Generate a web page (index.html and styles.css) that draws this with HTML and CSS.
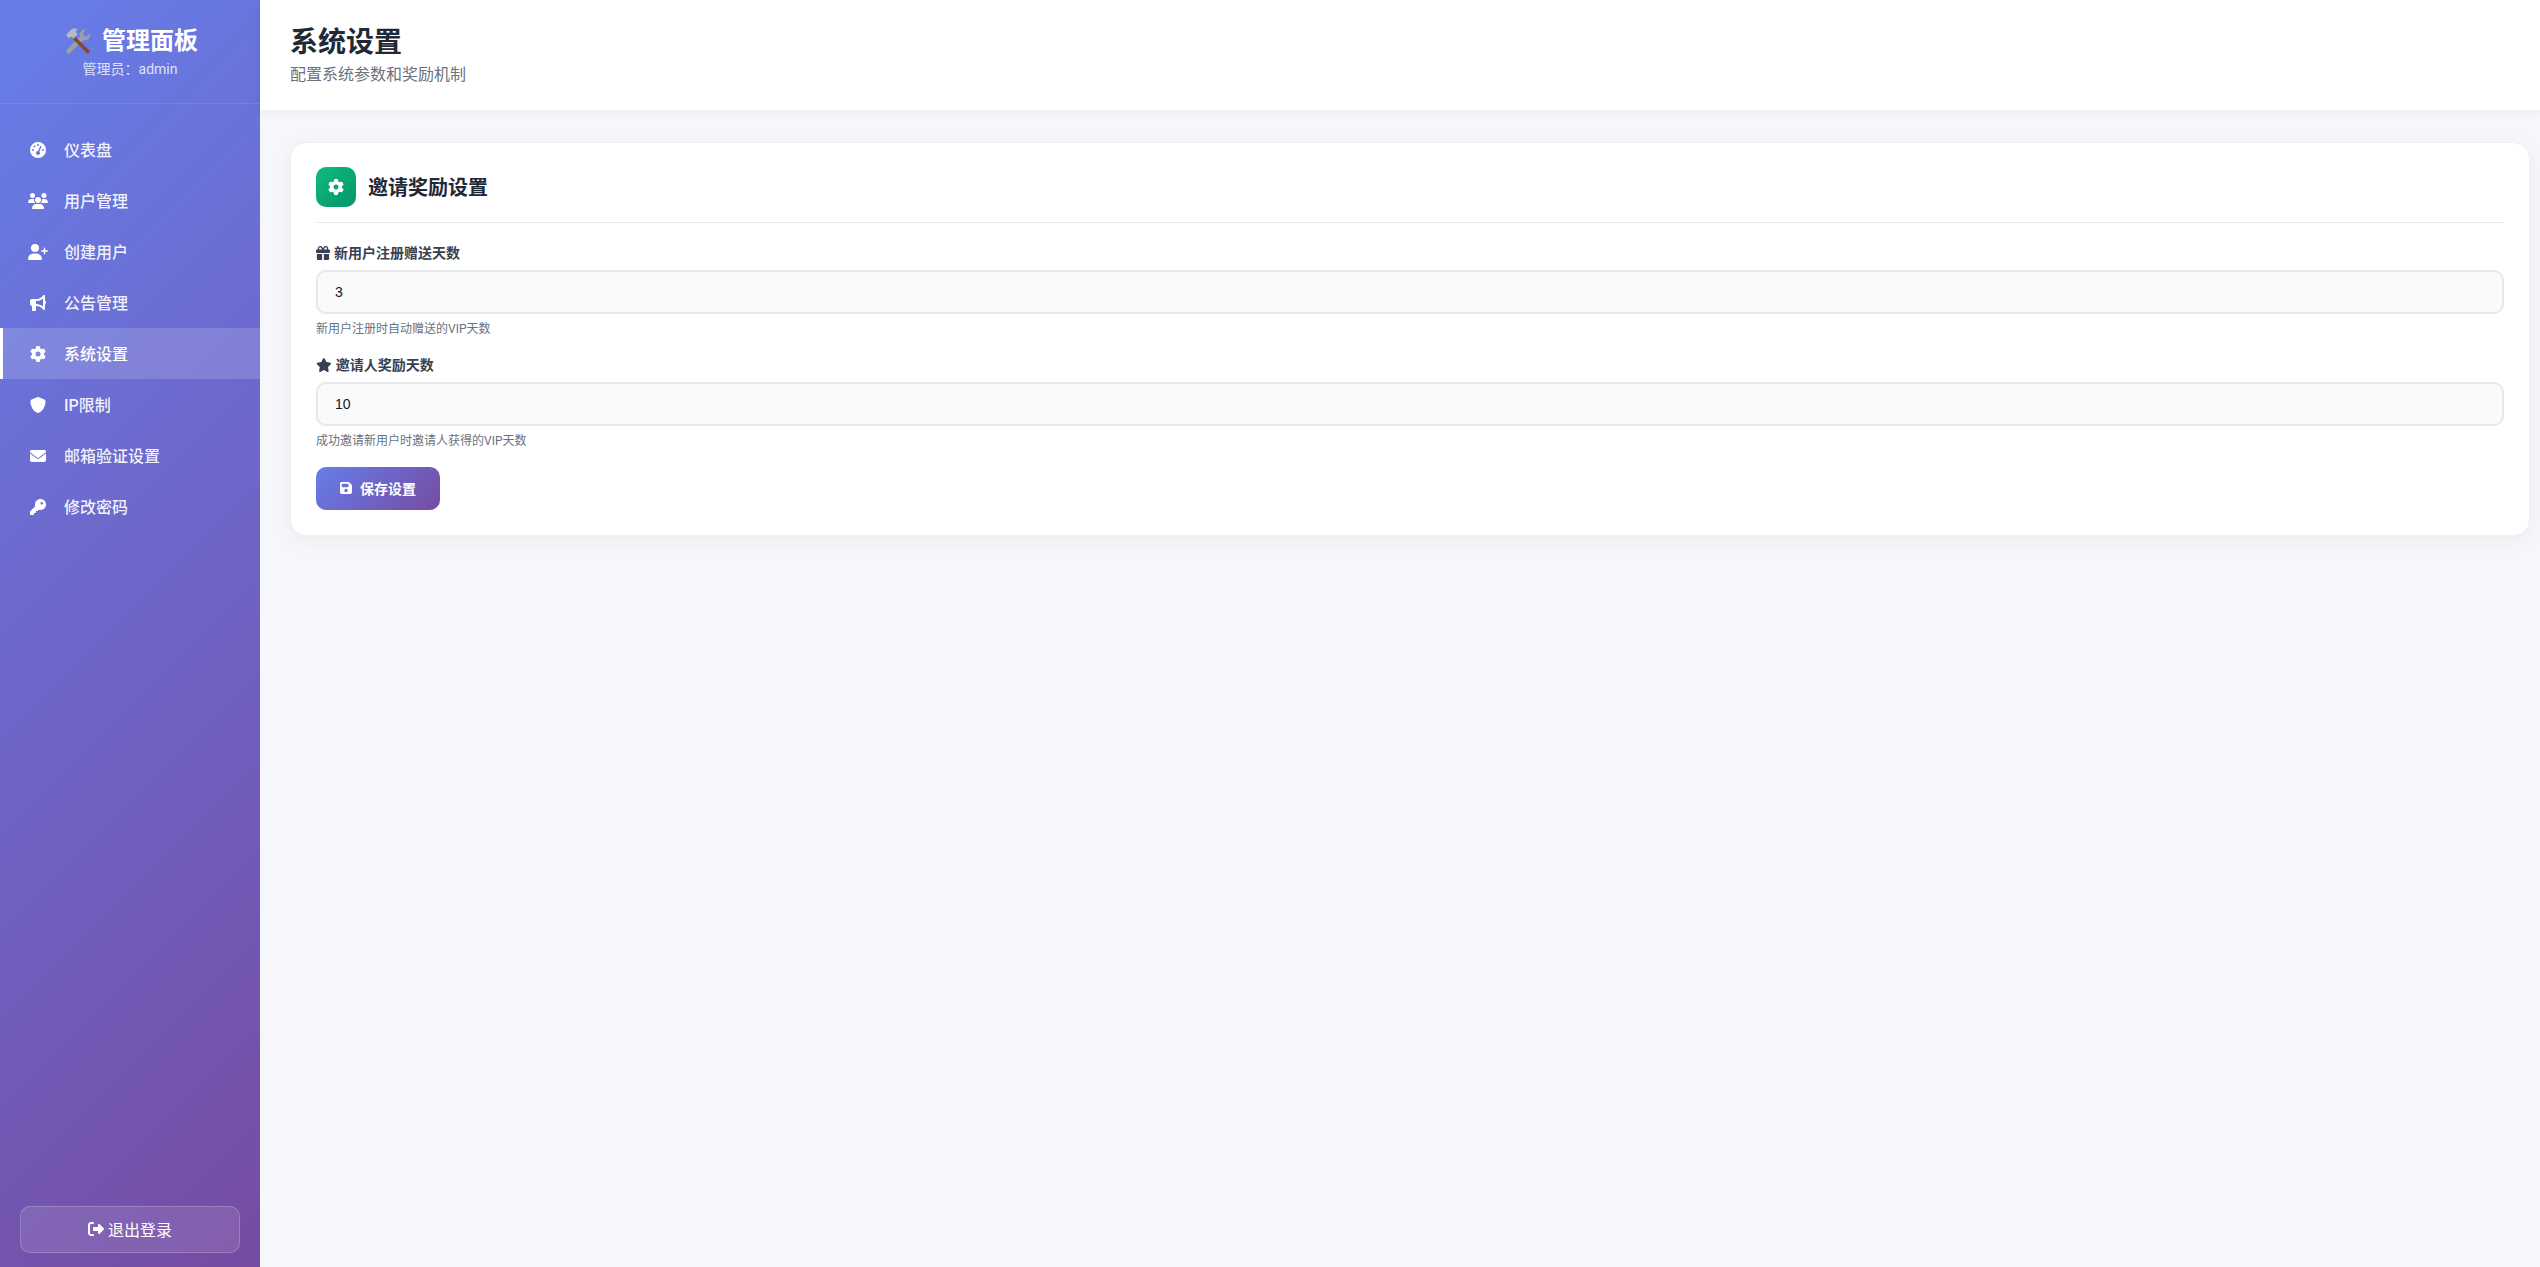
FILE: index.html
```html
<!DOCTYPE html>
<html lang="zh-CN">
<head>
    <meta charset="UTF-8">
    <meta name="viewport" content="width=device-width, initial-scale=1.0">
    <title>系统设置</title>
    <link rel="stylesheet" href="styles.css">
</head>
<body>
    <aside class="sidebar">
        <div class="brand">
            <h1 class="brand-title">
                <svg class="brand-emoji" viewBox="0 0 36 36" aria-hidden="true">
                    <path fill="#9aa0a6" d="M27 3a7 7 0 0 0-6.6 9.3L3.6 29.1a3 3 0 0 0 4.3 4.3l16.8-16.8A7 7 0 0 0 33.6 8l-4.4 4.4-4-1-1-4L28.6 3.1A7 7 0 0 0 27 3z"/>
                    <path fill="#7f4a36" d="M14.6 12.4l-3.2 3.2 17.9 17.9a2.3 2.3 0 0 0 3.2-3.2z"/>
                    <path fill="#b6babd" d="M3 9.6l7.4-7.2c2.8-1 5.4-.6 7.6 1l-2.2.8-.3 3 2.2 2.2-5.5 5.5-2.2-2.2-2.6.2-1.8 1.8z"/>
                </svg>
                <span>管理面板</span>
            </h1>
            <p class="brand-user">管理员：admin</p>
        </div>
        <nav class="nav">
            <a class="nav-item" href="#">
                <svg class="nav-icon" viewBox="0 0 512 512"><path d="M0 256a256 256 0 1 1 512 0A256 256 0 1 1 0 256zM288 96a32 32 0 1 0 -64 0 32 32 0 1 0 64 0zM256 416c35.3 0 64-28.7 64-64c0-17.4-6.9-33.1-18.1-44.6L366 161.7c5.3-12.1-.2-26.3-12.3-31.6s-26.3 .2-31.6 12.3L257.9 288c-.6 0-1.3 0-1.9 0c-35.3 0-64 28.7-64 64s28.7 64 64 64zM176 144a32 32 0 1 0 -64 0 32 32 0 1 0 64 0zM96 288a32 32 0 1 0 0-64 32 32 0 1 0 0 64zm352-32a32 32 0 1 0 -64 0 32 32 0 1 0 64 0z"/></svg>
                <span>仪表盘</span>
            </a>
            <a class="nav-item" href="#">
                <svg class="nav-icon" viewBox="0 0 640 512"><path d="M144 0a80 80 0 1 1 0 160A80 80 0 1 1 144 0zM512 0a80 80 0 1 1 0 160A80 80 0 1 1 512 0zM0 298.7C0 239.8 47.8 192 106.7 192h42.7c15.9 0 31 3.5 44.6 9.7c-1.3 7.2-1.9 14.7-1.9 22.3c0 38.2 16.8 72.5 43.3 96c-.2 0-.4 0-.7 0H21.3C9.6 320 0 310.4 0 298.7zM405.3 320c-.2 0-.4 0-.7 0c26.6-23.5 43.3-57.8 43.3-96c0-7.6-.7-15-1.9-22.3c13.6-6.3 28.7-9.7 44.6-9.7h42.7C592.2 192 640 239.8 640 298.7c0 11.8-9.6 21.3-21.3 21.3H405.3zM224 224a96 96 0 1 1 192 0 96 96 0 1 1 -192 0zM128 485.3C128 411.7 187.7 352 261.3 352H378.7C452.3 352 512 411.7 512 485.3c0 14.7-11.9 26.7-26.7 26.7H154.7c-14.7 0-26.7-11.9-26.7-26.7z"/></svg>
                <span>用户管理</span>
            </a>
            <a class="nav-item" href="#">
                <svg class="nav-icon" viewBox="0 0 640 512"><path d="M96 128a128 128 0 1 1 256 0A128 128 0 1 1 96 128zM0 482.3C0 383.8 79.8 304 178.3 304h91.4C368.2 304 448 383.8 448 482.3c0 16.4-13.3 29.7-29.7 29.7H29.7C13.3 512 0 498.7 0 482.3zM504 312V248H440c-13.3 0-24-10.7-24-24s10.7-24 24-24h64V136c0-13.3 10.7-24 24-24s24 10.7 24 24v64h64c13.3 0 24 10.7 24 24s-10.7 24-24 24H552v64c0 13.3-10.7 24-24 24s-24-10.7-24-24z"/></svg>
                <span>创建用户</span>
            </a>
            <a class="nav-item" href="#">
                <svg class="nav-icon" viewBox="0 0 512 512"><path d="M480 32c0-12.9-7.8-24.6-19.8-29.6s-25.7-2.2-34.9 6.9L381.7 53c-48 48-113.1 75-181 75H192 160 64c-35.3 0-64 28.7-64 64v96c0 35.3 28.7 64 64 64l0 128c0 17.7 14.3 32 32 32h64c17.7 0 32-14.3 32-32V352l8.7 0c67.9 0 133 27 181 75l43.6 43.6c9.2 9.2 22.9 11.9 34.9 6.9s19.8-16.6 19.8-29.6V300.4c18.6-8.8 32-32.5 32-60.4s-13.4-51.6-32-60.4V32zm-64 76.7V240 371.3C357.2 317.8 280.5 288 200.7 288H192V192h8.7c79.8 0 156.5-29.8 215.3-83.3z"/></svg>
                <span>公告管理</span>
            </a>
            <a class="nav-item active" href="#">
                <svg class="nav-icon" viewBox="0 0 512 512"><path d="M495.9 166.6c3.2 8.7 .5 18.4-6.4 24.6l-43.3 39.4c1.1 8.3 1.7 16.8 1.7 25.4s-.6 17.1-1.7 25.4l43.3 39.4c6.9 6.2 9.6 15.9 6.4 24.6c-4.4 11.9-9.7 23.3-15.8 34.3l-4.7 8.1c-6.6 11-14 21.4-22.1 31.2c-5.9 7.2-15.7 9.6-24.5 6.8l-55.7-17.7c-13.4 10.3-28.2 18.9-44 25.4l-12.5 57.1c-2 9.1-9 16.3-18.2 17.8c-13.8 2.3-28 3.5-42.5 3.5s-28.7-1.2-42.5-3.5c-9.2-1.5-16.2-8.7-18.2-17.8l-12.5-57.1c-15.8-6.5-30.6-15.1-44-25.4L83.1 425.9c-8.8 2.8-18.6 .3-24.5-6.8c-8.1-9.8-15.5-20.2-22.1-31.2l-4.7-8.1c-6.1-11-11.4-22.4-15.8-34.3c-3.2-8.7-.5-18.4 6.4-24.6l43.3-39.4C64.6 273.1 64 264.6 64 256s.6-17.1 1.7-25.4L22.4 191.2c-6.9-6.2-9.6-15.9-6.4-24.6c4.4-11.9 9.7-23.3 15.8-34.3l4.7-8.1c6.6-11 14-21.4 22.1-31.2c5.9-7.2 15.7-9.6 24.5-6.8l55.7 17.7c13.4-10.3 28.2-18.9 44-25.4l12.5-57.1c2-9.1 9-16.3 18.2-17.8C227.3 1.2 241.5 0 256 0s28.7 1.2 42.5 3.5c9.2 1.5 16.2 8.7 18.2 17.8l12.5 57.1c15.8 6.5 30.6 15.1 44 25.4l55.7-17.7c8.8-2.8 18.6-.3 24.5 6.8c8.1 9.8 15.5 20.2 22.1 31.2l4.7 8.1c6.1 11 11.4 22.4 15.8 34.3zM256 336a80 80 0 1 0 0-160 80 80 0 1 0 0 160z"/></svg>
                <span>系统设置</span>
            </a>
            <a class="nav-item" href="#">
                <svg class="nav-icon" viewBox="0 0 512 512"><path d="M256 0c4.6 0 9.2 1 13.4 2.9L457.7 82.8c22 9.3 38.4 31 38.3 57.2c-.5 99.2-41.3 280.7-213.6 363.2c-16.7 8-36.1 8-52.8 0C57.3 420.7 16.5 239.2 16 140c-.1-26.2 16.3-47.9 38.3-57.2L242.7 2.9C246.8 1 251.4 0 256 0z"/></svg>
                <span>IP限制</span>
            </a>
            <a class="nav-item" href="#">
                <svg class="nav-icon" viewBox="0 0 512 512"><path d="M48 64C21.5 64 0 85.5 0 112c0 15.1 7.1 29.3 19.2 38.4L236.8 313.6c11.4 8.5 27 8.5 38.4 0L492.8 150.4c12.1-9.1 19.2-23.3 19.2-38.4c0-26.5-21.5-48-48-48H48zM0 176V384c0 35.3 28.7 64 64 64H448c35.3 0 64-28.7 64-64V176L294.4 339.2c-22.8 17.1-54 17.1-76.8 0L0 176z"/></svg>
                <span>邮箱验证设置</span>
            </a>
            <a class="nav-item" href="#">
                <svg class="nav-icon" viewBox="0 0 512 512"><path d="M336 352c97.2 0 176-78.8 176-176S433.2 0 336 0S160 78.8 160 176c0 18.7 2.9 36.8 8.3 53.7L7 391c-4.5 4.5-7 10.6-7 17v80c0 13.3 10.7 24 24 24h80c13.3 0 24-10.7 24-24V448h40c13.3 0 24-10.7 24-24V384h40c6.4 0 12.5-2.5 17-7l33.3-33.3c16.9 5.4 35 8.3 53.7 8.3zM376 96a40 40 0 1 1 0 80 40 40 0 1 1 0-80z"/></svg>
                <span>修改密码</span>
            </a>
        </nav>
        <div class="sidebar-foot">
            <a class="logout" href="#">
                <svg class="logout-icon" viewBox="0 0 512 512"><path d="M377.9 105.9L500.7 228.7c7.2 7.2 11.3 17.1 11.3 27.3s-4.1 20.1-11.3 27.3L377.9 406.1c-6.4 6.4-15 9.9-24 9.9c-18.7 0-33.9-15.2-33.9-33.9l0-62.1-128 0c-17.7 0-32-14.3-32-32l0-64c0-17.7 14.3-32 32-32l128 0 0-62.1c0-18.7 15.2-33.9 33.9-33.9c9 0 17.6 3.6 24 9.9zM160 96L96 96c-17.7 0-32 14.3-32 32l0 256c0 17.7 14.3 32 32 32l64 0c17.7 0 32 14.3 32 32s-14.3 32-32 32l-64 0c-53 0-96-43-96-96L0 128C0 75 43 32 96 32l64 0c17.7 0 32 14.3 32 32s-14.3 32-32 32z"/></svg>
                <span>退出登录</span>
            </a>
        </div>
    </aside>

    <main class="main">
        <header class="topbar">
            <h2 class="page-title">系统设置</h2>
            <p class="page-sub">配置系统参数和奖励机制</p>
        </header>
        <div class="content">
            <section class="card">
                <div class="card-head">
                    <span class="card-icon">
                        <svg viewBox="0 0 512 512"><path d="M495.9 166.6c3.2 8.7 .5 18.4-6.4 24.6l-43.3 39.4c1.1 8.3 1.7 16.8 1.7 25.4s-.6 17.1-1.7 25.4l43.3 39.4c6.9 6.2 9.6 15.9 6.4 24.6c-4.4 11.9-9.7 23.3-15.8 34.3l-4.7 8.1c-6.6 11-14 21.4-22.1 31.2c-5.9 7.2-15.7 9.6-24.5 6.8l-55.7-17.7c-13.4 10.3-28.2 18.9-44 25.4l-12.5 57.1c-2 9.1-9 16.3-18.2 17.8c-13.8 2.3-28 3.5-42.5 3.5s-28.7-1.2-42.5-3.5c-9.2-1.5-16.2-8.7-18.2-17.8l-12.5-57.1c-15.8-6.5-30.6-15.1-44-25.4L83.1 425.9c-8.8 2.8-18.6 .3-24.5-6.8c-8.1-9.8-15.5-20.2-22.1-31.2l-4.7-8.1c-6.1-11-11.4-22.4-15.8-34.3c-3.2-8.7-.5-18.4 6.4-24.6l43.3-39.4C64.6 273.1 64 264.6 64 256s.6-17.1 1.7-25.4L22.4 191.2c-6.9-6.2-9.6-15.9-6.4-24.6c4.4-11.9 9.7-23.3 15.8-34.3l4.7-8.1c6.6-11 14-21.4 22.1-31.2c5.9-7.2 15.7-9.6 24.5-6.8l55.7 17.7c13.4-10.3 28.2-18.9 44-25.4l12.5-57.1c2-9.1 9-16.3 18.2-17.8C227.3 1.2 241.5 0 256 0s28.7 1.2 42.5 3.5c9.2 1.5 16.2 8.7 18.2 17.8l12.5 57.1c15.8 6.5 30.6 15.1 44 25.4l55.7-17.7c8.8-2.8 18.6-.3 24.5 6.8c8.1 9.8 15.5 20.2 22.1 31.2l4.7 8.1c6.1 11 11.4 22.4 15.8 34.3zM256 336a80 80 0 1 0 0-160 80 80 0 1 0 0 160z"/></svg>
                    </span>
                    <h3 class="card-title">邀请奖励设置</h3>
                </div>
                <form>
                    <div class="field">
                        <label class="field-label" for="signupDays">
                            <svg class="label-icon" viewBox="0 0 512 512"><path d="M190.5 68.8L225.3 128H224 152c-22.1 0-40-17.9-40-40s17.9-40 40-40h2.2c14.9 0 28.8 7.9 36.3 20.8zM64 88c0 14.4 3.5 28 9.6 40H32c-17.7 0-32 14.3-32 32v64c0 17.7 14.3 32 32 32H480c17.7 0 32-14.3 32-32V160c0-17.7-14.3-32-32-32H438.4c6.1-12 9.6-25.6 9.6-40c0-48.6-39.4-88-88-88h-2.2c-31.9 0-61.5 16.9-77.7 44.4L256 85.5l-24.1-41C215.7 16.9 186.1 0 154.2 0H152C103.4 0 64 39.4 64 88zm336 0c0 22.1-17.9 40-40 40H288h-1.3l34.8-59.2C329.1 55.9 342.9 48 357.8 48H360c22.1 0 40 17.9 40 40zM32 288V464c0 26.5 21.5 48 48 48H224V288H32zM288 512H432c26.5 0 48-21.5 48-48V288H288V512z"/></svg>
                            新用户注册赠送天数
                        </label>
                        <input class="field-input" id="signupDays" type="text" value="3">
                        <p class="field-hint">新用户注册时自动赠送的VIP天数</p>
                    </div>
                    <div class="field">
                        <label class="field-label" for="inviteDays">
                            <svg class="label-icon label-icon-wide" viewBox="0 0 576 512"><path d="M316.9 18C311.6 7 300.4 0 288.1 0s-23.4 7-28.8 18L195 150.3 51.4 171.5c-12 1.8-22 10.2-25.7 21.7s-.7 24.2 7.9 32.7L137.8 329 113.2 474.7c-2 12 3 24.2 12.9 31.3s23 8 33.8 2.3l128.3-68.5 128.3 68.5c10.8 5.7 23.9 4.9 33.8-2.3s14.9-19.3 12.9-31.3L438.5 329 542.7 225.9c8.6-8.5 11.7-21.2 7.9-32.7s-13.7-19.9-25.7-21.7L381.2 150.3 316.9 18z"/></svg>
                            邀请人奖励天数
                        </label>
                        <input class="field-input" id="inviteDays" type="text" value="10">
                        <p class="field-hint">成功邀请新用户时邀请人获得的VIP天数</p>
                    </div>
                    <button class="save-btn" type="button">
                        <svg class="save-icon" viewBox="0 0 448 512"><path d="M64 32C28.7 32 0 60.7 0 96V416c0 35.3 28.7 64 64 64H384c35.3 0 64-28.7 64-64V173.3c0-17-6.7-33.3-18.7-45.3L352 50.7C340 38.7 323.7 32 306.7 32H64zm0 96c0-17.7 14.3-32 32-32H288c17.7 0 32 14.3 32 32v64c0 17.7-14.3 32-32 32H96c-17.7 0-32-14.3-32-32V128zM224 288a64 64 0 1 1 0 128 64 64 0 1 1 0-128z"/></svg>
                        <span>保存设置</span>
                    </button>
                </form>
            </section>
        </div>
    </main>
</body>
</html>
```
FILE: styles.css
```css
* {
    box-sizing: border-box;
}

body {
    margin: 0;
    height: 100vh;
    display: flex;
    overflow: hidden;
    background: #f5f7fb;
    color: #1f2937;
    font-family: Roboto, "Noto Sans CJK SC", sans-serif;
}

.sidebar {
    width: 260px;
    flex-shrink: 0;
    display: flex;
    flex-direction: column;
    background: linear-gradient(135deg, #667eea 0%, #764ba2 100%);
    color: white;
}

.brand {
    height: 104px;
    padding-top: 25px;
    text-align: center;
    border-bottom: 1px solid rgba(255, 255, 255, 0.1);
}

.brand-title {
    margin: 0;
    display: flex;
    justify-content: center;
    align-items: center;
    font-size: 24px;
    line-height: 32px;
    font-weight: 700;
}

.brand-emoji {
    width: 28px;
    height: 28px;
    margin-left: 2px;
    margin-right: 10px;
}

.brand-user {
    margin: 2px 0 0;
    font-size: 14px;
    line-height: 20px;
    color: rgba(255, 255, 255, 0.8);
}

.nav {
    padding-top: 20px;
    flex: 1;
}

.nav-item {
    display: flex;
    align-items: center;
    gap: 16px;
    height: 51px;
    padding-left: 28px;
    color: rgba(255, 255, 255, 0.92);
    text-decoration: none;
    font-size: 16px;
    font-weight: 500;
}

.nav-item span {
    margin-bottom: 1px;
}

.nav-item.active {
    background: rgba(255, 255, 255, 0.15);
    border-left: 3px solid white;
    padding-left: 25px;
    color: white;
}

.nav-icon {
    width: 20px;
    height: 16px;
    fill: white;
}

.sidebar-foot {
    padding: 0 20px 14px;
}

.logout {
    display: flex;
    justify-content: center;
    align-items: center;
    gap: 4px;
    height: 47px;
    padding-bottom: 1px;
    background: rgba(255, 255, 255, 0.1);
    border: 1px solid rgba(255, 255, 255, 0.2);
    border-radius: 10px;
    color: white;
    text-decoration: none;
    font-size: 16px;
}

.logout-icon {
    width: 16px;
    height: 16px;
    fill: white;
}

.main {
    flex: 1;
    min-width: 0;
}

.topbar {
    height: 110px;
    padding: 23px 30px 0;
    background: white;
    box-shadow: 0 2px 10px rgba(0, 0, 0, 0.05);
}

.page-title {
    margin: 0;
    font-size: 28px;
    line-height: 40px;
    font-weight: 700;
    color: #1f2937;
}

.page-sub {
    margin: 0;
    font-size: 16px;
    line-height: 24px;
    color: #6b7280;
}

.content {
    padding: 32px 10px 0 30px;
}

.card {
    height: 394px;
    padding: 24px 25px;
    background: white;
    border: 1px solid #eef0f3;
    border-radius: 16px;
    box-shadow: 0 4px 20px rgba(0, 0, 0, 0.05);
}

.card-head {
    display: flex;
    align-items: center;
    gap: 12px;
    padding-bottom: 15px;
    border-bottom: 1px solid #e5e7eb;
    margin-bottom: 20px;
}

.card-icon {
    width: 40px;
    height: 40px;
    display: flex;
    justify-content: center;
    align-items: center;
    background: linear-gradient(135deg, #10b981, #059669);
    border-radius: 10px;
}

.card-icon svg {
    width: 16px;
    height: 16px;
    fill: white;
}

.card-title {
    margin: 2px 0 0;
    font-size: 20px;
    line-height: 28px;
    font-weight: 700;
    color: #1f2937;
}

.field {
    margin-bottom: 17px;
}

.field-label {
    display: flex;
    align-items: center;
    gap: 4px;
    font-size: 14px;
    line-height: 20px;
    font-weight: 600;
    color: #374151;
    margin-bottom: 7px;
}

.label-icon {
    height: 14px;
    width: 14px;
    fill: #374151;
}

.label-icon-wide {
    width: 15.75px;
}

.field-input {
    display: block;
    width: 100%;
    height: 44px;
    padding: 0 17px;
    background: #f9fafb;
    border: 2px solid #e5e7eb;
    border-radius: 10px;
    font-family: "Liberation Sans", sans-serif;
    font-size: 14px;
    color: #111827;
}

.field-hint {
    margin: 6px 0 0;
    font-size: 12px;
    line-height: 18px;
    color: #6b7280;
}

.save-btn {
    display: flex;
    align-items: center;
    gap: 8px;
    height: 43px;
    padding: 0 24px 1px;
    background: linear-gradient(135deg, #667eea 0%, #764ba2 100%);
    border: none;
    border-radius: 10px;
    color: white;
    font-family: inherit;
    font-size: 14px;
    font-weight: 700;
}

.save-icon {
    width: 12px;
    height: 14px;
    fill: white;
}
```
